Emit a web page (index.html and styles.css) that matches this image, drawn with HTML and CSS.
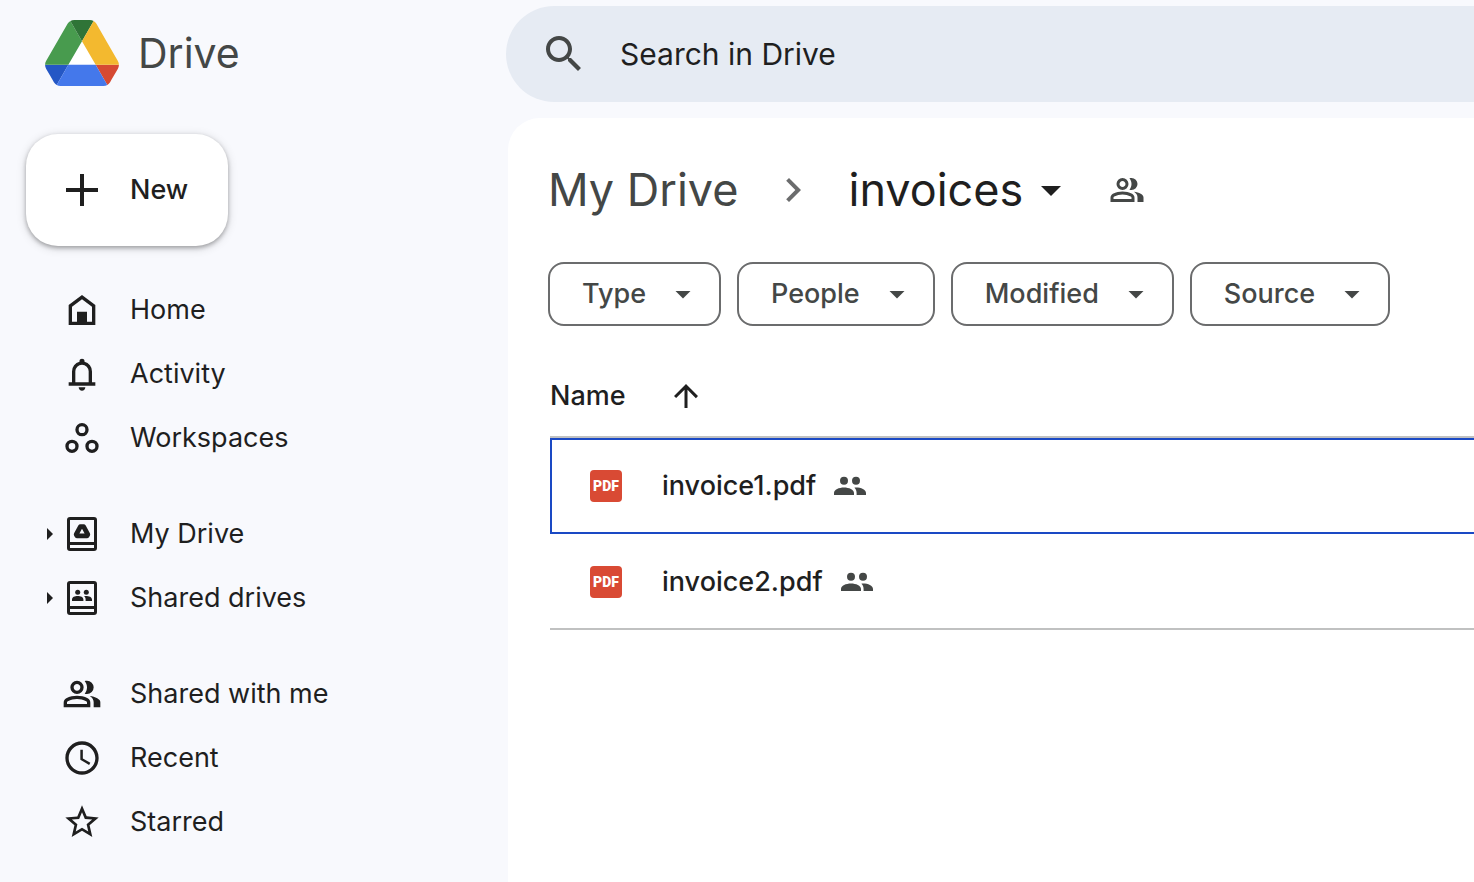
FILE: index.html
```html
<!DOCTYPE html>
<html lang="en">
<head>
    <meta charset="UTF-8">
    <meta name="viewport" content="width=device-width, initial-scale=1.0">
    <title>invoices - Google Drive</title>
    <link rel="stylesheet" href="styles.css">
</head>
<body>
    <!-- Shared icons -->
    <svg class="sprite" aria-hidden="true">
        <symbol id="icon-group" viewBox="0 0 24 24">
            <path d="M1 20v-2.8q0-.85.438-1.562.437-.713 1.162-1.088 1.55-.775 3.15-1.163Q7.35 13 9 13t3.25.387q1.6.388 3.15 1.163.725.375 1.162 1.088Q17 16.35 17 17.2V20zm18 0v-3q0-1.1-.612-2.113-.613-1.012-1.738-1.737 1.275.15 2.4.512 1.125.363 2.1.888.9.5 1.375 1.112Q23 16.275 23 17v3zM9 12q-1.65 0-2.825-1.175Q5 9.65 5 8q0-1.65 1.175-2.825Q7.35 4 9 4q1.65 0 2.825 1.175Q13 6.35 13 8q0 1.65-1.175 2.825Q10.65 12 9 12zm10-4q0 1.65-1.175 2.825Q16.65 12 15 12q-.275 0-.7-.062-.425-.063-.7-.138.675-.8 1.037-1.775Q15 9.05 15 8t-.363-2.025Q14.275 5 13.6 4.2q.35-.125.7-.163Q14.65 4 15 4q1.65 0 2.825 1.175Q19 6.35 19 8zM3 18h12v-.8q0-.275-.137-.5-.138-.225-.363-.35-1.35-.675-2.725-1.013Q10.4 15 9 15t-2.775.337Q4.85 15.675 3.5 16.35q-.225.125-.362.35-.138.225-.138.5zm6-8q.825 0 1.413-.588Q11 8.825 11 8t-.587-1.412Q9.825 6 9 6q-.825 0-1.412.588Q7 7.175 7 8t.588 1.412Q8.175 10 9 10z"/>
        </symbol>
        <symbol id="icon-people" viewBox="0 0 32 32">
            <circle cx="10" cy="10.7" r="4"/>
            <circle cx="22" cy="10.7" r="4"/>
            <path d="M0 25v-2c0-3.5 5-5.6 10-5.6s10 2.1 10 5.6v2zM22.6 25v-2c0-2.2-.8-4-2.2-5.3.5-.2 1-.2 1.6-.2 5 0 10 2 10 5.5v2z"/>
        </symbol>
        <symbol id="icon-caret" viewBox="0 0 24 24">
            <path d="M7 10l5 5 5-5z"/>
        </symbol>
        <symbol id="icon-expand" viewBox="0 0 22 22">
            <path d="M7 5l6 6-6 6z"/>
        </symbol>
    </svg>

    <div class="app">
        <aside class="sidebar">
            <a href="#" class="logo">
                <svg class="logo-mark" viewBox="0 0 87.3 78">
                    <path fill="#fff" d="M43.65 25L27.5 53h32.3z"/>
                    <path fill="#2457c5" d="m6.6 66.85 3.85 6.65c.8 1.4 1.95 2.5 3.3 3.3l13.75-23.8h-27.5c0 1.55.4 3.1 1.2 4.5z"/>
                    <path fill="#489b4e" d="m43.65 25-13.75-23.8c-1.35.8-2.5 1.9-3.3 3.3l-25.4 44a9.06 9.06 0 0 0 -1.2 4.5h27.5z"/>
                    <path fill="#d64a33" d="m73.55 76.8c1.35-.8 2.5-1.9 3.3-3.3l1.6-2.75 7.65-13.25c.8-1.4 1.2-2.95 1.2-4.5h-27.5z"/>
                    <path fill="#2f7437" d="m43.65 25 13.75-23.8c-1.35-.8-2.9-1.2-4.5-1.2h-18.5c-1.6 0-3.15.45-4.5 1.2z"/>
                    <path fill="#4478eb" d="m59.8 53h-32.3l-13.75 23.8c1.35.8 2.9 1.2 4.5 1.2h50.8c1.6 0 3.15-.45 4.5-1.2z"/>
                    <path fill="#f3b92f" d="m73.4 26.5-12.7-22c-.8-1.4-1.95-2.5-3.3-3.3l-13.75 23.8 16.15 28h27.45c0-1.55-.4-3.1-1.2-4.5z"/>
                </svg>
                <span>Drive</span>
            </a>

            <button type="button" class="btn-new">
                <svg class="icon" viewBox="0 0 40 40"><path d="M18 4h4v14h14v4H22v14h-4V22H4v-4h14z"/></svg>
                New
            </button>

            <nav class="nav">
                <ul class="nav-group">
                    <li class="nav-item">
                        <a href="#" class="nav-link">
                            <svg class="icon" viewBox="0 0 24 24"><path fill-rule="evenodd" d="M4 21V9l8-6 8 6v12zM6 19h3v-6h6v6h3v-9l-6-4.5L6 10z"/></svg>
                            Home
                        </a>
                    </li>
                    <li class="nav-item">
                        <a href="#" class="nav-link">
                            <svg class="icon" viewBox="0 0 24 24"><path fill-rule="evenodd" d="M4 19v-2h2v-6.5q0-2.1 1.25-3.7T10.5 4.7v-.5q0-.6.44-1T12 2.8t1.06.4q.44.4.44 1v.5q2 .5 3.25 2.1T18 10.5V17h2v2zM8 17h8v-6.6q0-1.65-1.175-2.825T12 6.4 9.175 7.575 8 10.4zM12 22q-.825 0-1.412-.587Q10 20.825 10 20h4q0 .825-.587 1.413Q12.825 22 12 22z"/></svg>
                            Activity
                        </a>
                    </li>
                    <li class="nav-item">
                        <a href="#" class="nav-link">
                            <svg class="icon icon-line" viewBox="0 0 24 24"><circle cx="12" cy="7" r="3"/><circle cx="6" cy="17" r="3"/><circle cx="18" cy="17" r="3"/></svg>
                            Workspaces
                        </a>
                    </li>
                </ul>

                <ul class="nav-group">
                    <li class="nav-item">
                        <button type="button" class="expander" aria-label="Expand My Drive"><svg><use href="#icon-expand"/></svg></button>
                        <a href="#" class="nav-link">
                            <svg class="icon" viewBox="0 0 40 40">
                                <path fill="none" stroke="currentColor" stroke-width="3" d="M8 4.5h24a1.5 1.5 0 0 1 1.5 1.5v28a1.5 1.5 0 0 1-1.5 1.5H8a1.5 1.5 0 0 1-1.5-1.5V6A1.5 1.5 0 0 1 8 4.5zM7 29.5h26"/>
                                <path fill="none" stroke="currentColor" stroke-width="4.8" stroke-linejoin="round" d="M18.4 12.6h3.2l4.2 7.8-.9 1.5h-9.8l-.9-1.5z"/>
                            </svg>
                            My Drive
                        </a>
                    </li>
                    <li class="nav-item">
                        <button type="button" class="expander" aria-label="Expand Shared drives"><svg><use href="#icon-expand"/></svg></button>
                        <a href="#" class="nav-link">
                            <svg class="icon" viewBox="0 0 40 40">
                                <path fill="none" stroke="currentColor" stroke-width="3" d="M8 4.5h24a1.5 1.5 0 0 1 1.5 1.5v28a1.5 1.5 0 0 1-1.5 1.5H8a1.5 1.5 0 0 1-1.5-1.5V6A1.5 1.5 0 0 1 8 4.5zM7 29.5h26"/>
                                <circle cx="15.7" cy="14.3" r="2.5"/>
                                <circle cx="24.3" cy="14.3" r="2.5"/>
                                <path d="M10 23v-1.5c0-2.4 2.8-3.5 5.7-3.5s5.7 1.1 5.7 3.5V23zM23.6 23v-1.5c0-1.5-.6-2.6-1.5-3.4 3.5-.5 7.9.6 7.9 3.4V23z"/>
                            </svg>
                            Shared drives
                        </a>
                    </li>
                </ul>

                <ul class="nav-group">
                    <li class="nav-item">
                        <a href="#" class="nav-link">
                            <svg class="icon"><use href="#icon-group"/></svg>
                            Shared with me
                        </a>
                    </li>
                    <li class="nav-item">
                        <a href="#" class="nav-link">
                            <svg class="icon" viewBox="0 0 24 24"><path d="M11.99 2C6.47 2 2 6.48 2 12s4.47 10 9.99 10C17.52 22 22 17.52 22 12S17.52 2 11.99 2zM12 20c-4.42 0-8-3.58-8-8s3.58-8 8-8 8 3.58 8 8-3.58 8-8 8zm.5-13H11v6l5.25 3.15.75-1.23-4.5-2.67z"/></svg>
                            Recent
                        </a>
                    </li>
                    <li class="nav-item">
                        <a href="#" class="nav-link">
                            <svg class="icon" viewBox="0 0 24 24"><path d="M22 9.24l-7.19-.62L12 2 9.19 8.63 2 9.24l5.46 4.73L5.82 21 12 17.27 18.18 21l-1.63-7.03L22 9.24zM12 15.4l-3.76 2.27 1-4.28-3.32-2.88 4.38-.38L12 6.1l1.71 4.04 4.38.38-3.32 2.88 1 4.28L12 15.4z"/></svg>
                            Starred
                        </a>
                    </li>
                </ul>
            </nav>
        </aside>

        <div class="content">
            <form class="search" role="search">
                <button type="submit" class="search-btn" aria-label="Search">
                    <svg viewBox="0 0 24 24"><path d="M15.5 14h-.79l-.28-.27C15.41 12.59 16 11.11 16 9.5 16 5.91 13.09 3 9.5 3S3 5.91 3 9.5 5.91 16 9.5 16c1.61 0 3.09-.59 4.23-1.57l.27.28v.79l5 4.99L20.49 19l-4.99-5zm-6 0C7.01 14 5 11.99 5 9.5S7.01 5 9.5 5 14 7.01 14 9.5 11.99 14 9.5 14z"/></svg>
                </button>
                <input type="search" class="search-input" placeholder="Search in Drive" aria-label="Search in Drive">
            </form>

            <main class="panel">
                <div class="breadcrumbs">
                    <a href="#" class="crumb">My Drive</a>
                    <svg class="crumb-sep" viewBox="0 0 24 24"><path d="M10 6L8.59 7.41 13.17 12l-4.58 4.59L10 18l6-6z"/></svg>
                    <button type="button" class="crumb crumb-current">
                        invoices
                        <svg class="crumb-caret"><use href="#icon-caret"/></svg>
                    </button>
                    <button type="button" class="share-btn" aria-label="Manage access"><svg><use href="#icon-group"/></svg></button>
                </div>

                <div class="filters">
                    <button type="button" class="chip">Type <svg><use href="#icon-caret"/></svg></button>
                    <button type="button" class="chip">People <svg><use href="#icon-caret"/></svg></button>
                    <button type="button" class="chip">Modified <svg><use href="#icon-caret"/></svg></button>
                    <button type="button" class="chip">Source <svg><use href="#icon-caret"/></svg></button>
                </div>

                <table class="files">
                    <thead>
                        <tr>
                            <th scope="col">
                                <div class="files-head">
                                    Name
                                    <svg class="sort-icon" viewBox="0 0 24 24"><path d="M4 12l1.41 1.41L11 7.83V20h2V7.83l5.58 5.59L20 12l-8-8z"/></svg>
                                </div>
                            </th>
                        </tr>
                    </thead>
                    <tbody>
                        <tr class="selected">
                            <td>
                                <div class="file">
                                    <span class="pdf-icon">PDF</span>
                                    <span class="file-name">invoice1.pdf</span>
                                    <svg class="shared-icon"><use href="#icon-people"/></svg>
                                </div>
                            </td>
                        </tr>
                        <tr>
                            <td>
                                <div class="file">
                                    <span class="pdf-icon">PDF</span>
                                    <span class="file-name">invoice2.pdf</span>
                                    <svg class="shared-icon"><use href="#icon-people"/></svg>
                                </div>
                            </td>
                        </tr>
                    </tbody>
                </table>
            </main>
        </div>
    </div>
</body>
</html>
```
FILE: styles.css
```css
* {
    margin: 0;
    padding: 0;
    box-sizing: border-box;
}

body {
    font-family: Inter, Roboto, sans-serif;
    font-size: 27px;
    line-height: 40px;
    color: #1f1f1f;
    background: #f8f9fd;
}

a {
    color: inherit;
    text-decoration: none;
}

button {
    font: inherit;
    color: inherit;
    background: none;
    border: none;
    cursor: pointer;
}

svg {
    display: block;
    flex-shrink: 0;
    fill: currentColor;
}

.sprite {
    display: none;
}

.app {
    display: flex;
    min-height: 100vh;
    overflow: hidden;
}

/* Sidebar */
.sidebar {
    width: 506px;
    flex-shrink: 0;
}

.logo {
    display: flex;
    align-items: center;
    gap: 19px;
    height: 106px;
    padding-left: 45px;
    font-size: 41px;
    line-height: 56px;
    color: #444746;
}

.logo-mark {
    width: 74px;
    height: 66px;
}

.icon {
    width: 40px;
    height: 40px;
}

.icon-line {
    fill: none;
    stroke: currentColor;
    stroke-width: 2;
}

.btn-new {
    display: flex;
    align-items: center;
    gap: 28px;
    height: 112px;
    margin: 28px 0 32px 26px;
    padding: 0 40px 0 36px;
    border-radius: 32px;
    background: #fff;
    font-weight: 500;
    box-shadow: 0 2px 4px rgba(0,0,0,0.3), 0 2px 8px 2px rgba(0,0,0,0.1);
}

.nav-group {
    list-style: none;
    margin-bottom: 32px;
}

.nav-item {
    display: grid;
    grid-template-columns: 22px 1fr;
    align-items: center;
    height: 64px;
    padding-left: 40px;
}

.expander svg {
    width: 22px;
    height: 22px;
}

.nav-link {
    grid-column: 2;
    display: flex;
    align-items: center;
    gap: 28px;
}

/* Content */
.content {
    flex: 1;
    min-width: 0;
    display: flex;
    flex-direction: column;
    padding-top: 6px;
}

.search {
    display: flex;
    align-items: center;
    gap: 32px;
    height: 96px;
    margin-bottom: 16px;
    padding-left: 34px;
    border-radius: 48px 0 0 48px;
    background: #e6ebf3;
}

.search-btn svg {
    width: 48px;
    height: 48px;
    color: #444746;
}

.search-input {
    flex: 1;
    min-width: 0;
    border: none;
    outline: none;
    background: none;
    font: inherit;
    font-size: 30px;
    color: #1f1f1f;
}

.search-input::placeholder {
    color: #1f1f1f;
    opacity: 1;
}

.panel {
    flex: 1;
    margin-left: 2px;
    padding: 40px 0 40px 40px;
    border-radius: 32px 0 0 0;
    background: #fff;
}

.breadcrumbs {
    display: flex;
    align-items: center;
    height: 64px;
    font-size: 45px;
    line-height: 64px;
}

.crumb {
    color: #444746;
}

.crumb-sep {
    width: 48px;
    height: 48px;
    margin: 0 31px;
    color: #6b6c6d;
}

.crumb-current {
    display: flex;
    align-items: center;
    gap: 4px;
    color: #1f1f1f;
}

.crumb-caret {
    width: 48px;
    height: 48px;
}

.share-btn {
    margin-left: 34px;
    color: #444746;
}

.share-btn svg {
    width: 36px;
    height: 36px;
}

.filters {
    display: flex;
    gap: 16px;
    margin-top: 40px;
}

.chip {
    display: flex;
    align-items: center;
    gap: 19px;
    height: 64px;
    padding: 0 18px 0 32px;
    border: 2px solid #6b6c6d;
    border-radius: 16px;
    font-weight: 500;
    color: #444746;
}

.chip svg {
    width: 36px;
    height: 36px;
}

/* File list */
.files {
    width: 100%;
    margin: 30px 0 0 2px;
    border-collapse: separate;
    border-spacing: 0;
    text-align: left;
}

.files th,
.files td {
    font-weight: 500;
    border-bottom: 2px solid #c0c1c1;
}

.files-head {
    display: flex;
    align-items: center;
    gap: 42px;
    height: 80px;
}

.sort-icon {
    width: 36px;
    height: 36px;
}

.file {
    display: flex;
    align-items: center;
    height: 94px;
    padding: 2px 0 0 40px;
}

.selected {
    outline: 2px solid #1a49c4;
    outline-offset: -2px;
}

.pdf-icon {
    width: 32px;
    height: 32px;
    margin-right: 40px;
    border-radius: 4px;
    background: #d94a34;
    color: #fff;
    font-family: Roboto, sans-serif;
    font-size: 14px;
    font-weight: 900;
    line-height: 32px;
    text-align: center;
}

.file-name {
    margin-right: 18px;
}

.shared-icon {
    width: 32px;
    height: 32px;
    color: #444746;
}
```
